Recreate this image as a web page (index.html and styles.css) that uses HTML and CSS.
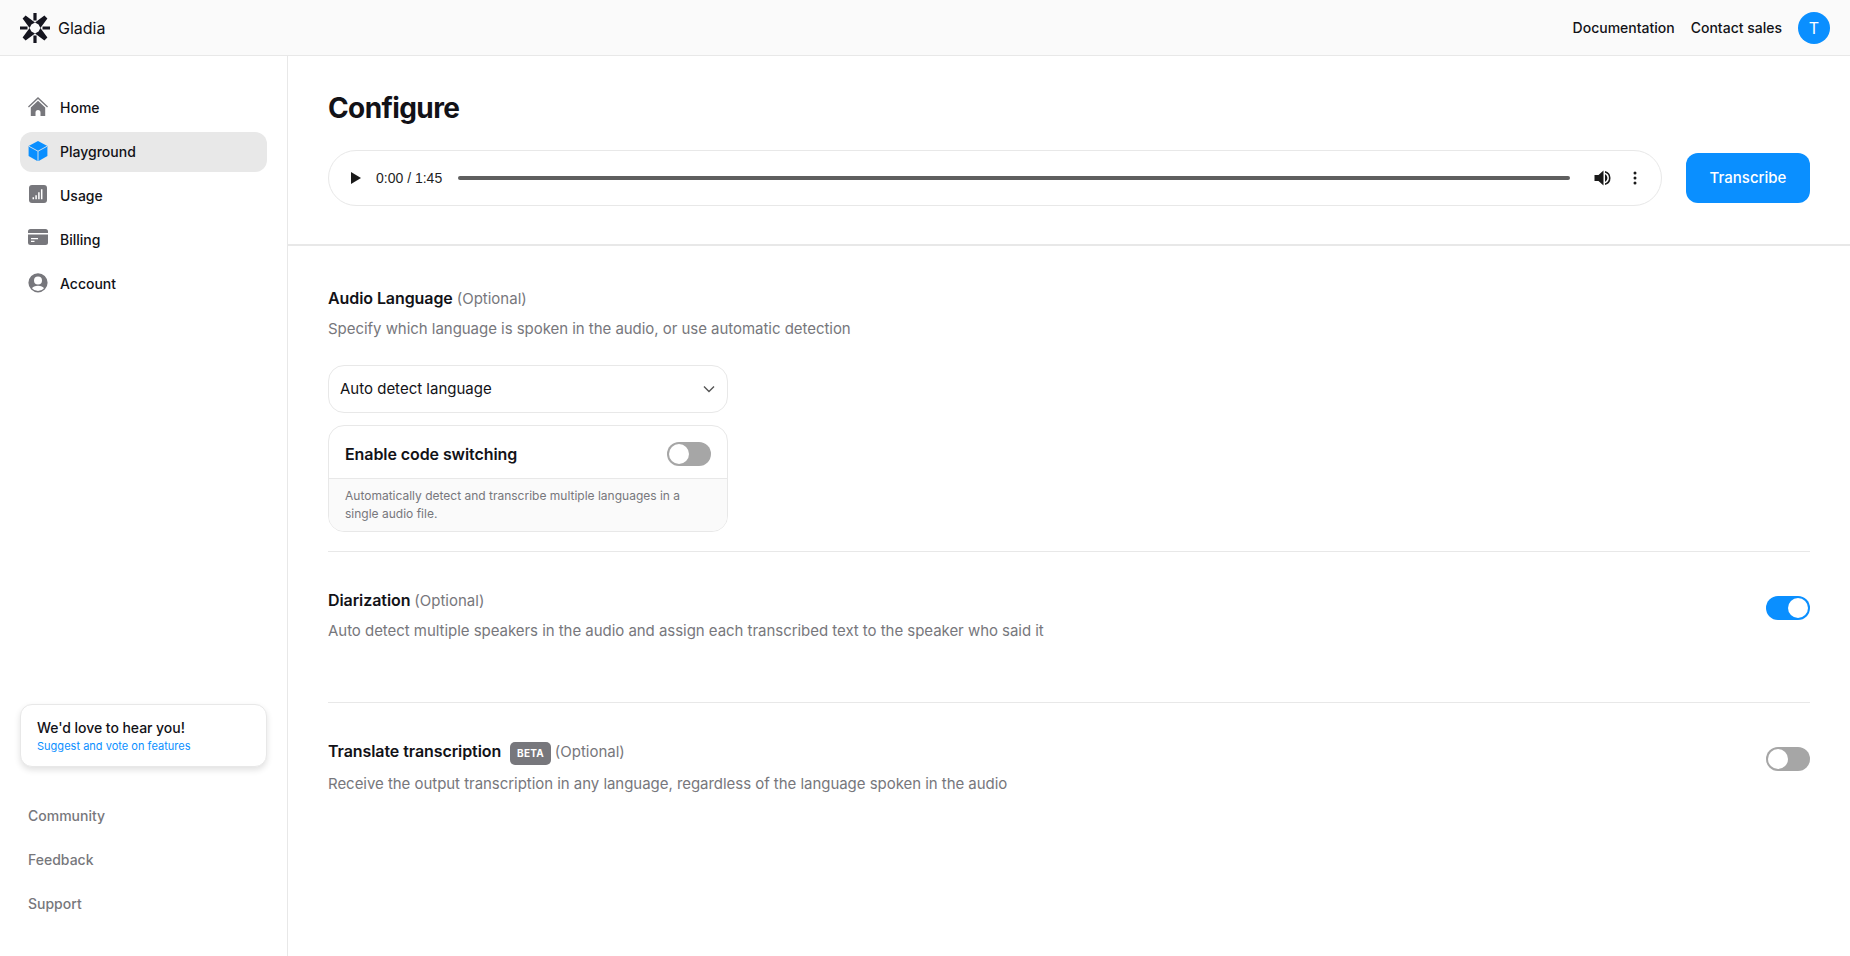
FILE: index.html
```html
<!DOCTYPE html>
<html lang="en">
<head>
<meta charset="utf-8">
<title>Gladia</title>
<link rel="stylesheet" href="styles.css">
</head>
<body>
<header class="topbar">
  <div class="brand">
    <svg class="logo" viewBox="0 0 30 30" fill="#15151f">
      <path d="M15 0V7.500M15 30V22.500M0 15H7.500M30 15H22.500" fill="none" stroke="#15151f" stroke-width="3.200"/>
      <path d="M5.600 2.600L15 9.600L11.400 11.400L9.600 15L2.600 5.600z"/>
      <path d="M24.400 2.600L15 9.600L18.600 11.400L20.400 15L27.400 5.600z"/>
      <path d="M5.600 27.400L15 20.400L11.400 18.600L9.600 15L2.600 24.400z"/>
      <path d="M24.400 27.400L15 20.400L18.600 18.600L20.400 15L27.400 24.400z"/>
    </svg>
    <span class="brand-name">Gladia</span>
  </div>
  <nav class="top-links">
    <a>Documentation</a>
    <a>Contact sales</a>
    <span class="avatar">T</span>
  </nav>
</header>
<div class="shell">
  <aside class="sidebar">
    <ul class="nav">
      <li class="nav-item">
        <svg class="nav-icon" viewBox="0 0 20 20" fill="#77777c"><path d="M10 0L0 9.400l.9 1L10 2l9.100 8.400.9-1z"/><path d="M10 3.800L2.800 10.500V19h4.700v-3.500a2.500 2.500 0 0 1 5 0V19h4.700v-8.500z"/></svg>
        <span>Home</span>
      </li>
      <li class="nav-item active">
        <svg class="nav-icon" viewBox="0 0 20 20"><path d="M10 0L19.400 5V15L10 20.400L.6 15V5z" fill="#0a8fff"/><path d="M.8 5.200L10 10.200L19.200 5.200M10 10.200V20.400" fill="none" stroke="#e8e8e8" stroke-width=".9"/></svg>
        <span>Playground</span>
      </li>
      <li class="nav-item">
        <svg class="nav-icon icon-usage" viewBox="0 0 20 20"><rect x="1" y="1" width="18" height="18" rx="3" fill="#77777c"/><path d="M5.300 15.300v-2M8.100 15.300v-4M10.900 15.300V8.300M13.700 15.300V5.300" stroke="#fff" stroke-width="1.500" fill="none"/></svg>
        <span>Usage</span>
      </li>
      <li class="nav-item">
        <svg class="nav-icon" viewBox="0 1 20 20" fill="#77777c"><path d="M2.500 1h15A2.500 2.500 0 0 1 20 3.500V5H0V3.500A2.500 2.500 0 0 1 2.500 1z"/><path d="M0 6.500h20v8A2.500 2.500 0 0 1 17.500 17h-15A2.500 2.500 0 0 1 0 14.500z"/><path d="M3 10h7v1.200H3zM3 12.800h3.500V14H3z" fill="#fff"/></svg>
        <span>Billing</span>
      </li>
      <li class="nav-item">
        <svg class="nav-icon" viewBox="0 0 20 20" fill="#77777c"><path fill-rule="evenodd" d="M10 .2a9.600 9.600 0 1 1 0 19.200a9.600 9.600 0 0 1 0-19.200zM10 3.600a4 4 0 1 0 0 8a4 4 0 0 0 0-8zM10 12.800c-2.900 0-5.200 1-6 2.400a7.700 7.700 0 0 0 12 0c-.8-1.400-3.100-2.400-6-2.400z"/></svg>
        <span>Account</span>
      </li>
    </ul>
    <div class="feedback-card">
      <div class="feedback-title">We'd love to hear you!</div>
      <div class="feedback-sub">Suggest and vote on features</div>
    </div>
    <ul class="sub-nav">
      <li>Community</li>
      <li>Feedback</li>
      <li>Support</li>
    </ul>
  </aside>
  <main class="main">
    <section class="config-head">
      <h1>Configure</h1>
      <div class="player-row">
        <div class="player">
          <svg class="play" viewBox="0 0 10 12" fill="#1a1a1a"><path d="M0 0L10 6L0 12z"/></svg>
          <span class="time">0:00 / 1:45</span>
          <span class="track"></span>
          <svg class="volume" viewBox="0 0 18 18" fill="#1a1a1a"><path d="M1.500 6v6H5.500L10.500 16.500V1.500L5.500 6z"/><path d="M12 5a4.500 4.500 0 0 1 0 8z"/><path d="M12 2v1.800a5.400 5.400 0 0 1 0 10.400V16a7.200 7.200 0 0 0 0-14z"/></svg>
          <svg class="more" viewBox="0 0 4 14" fill="#1a1a1a"><circle cx="2" cy="2" r="1.500"/><circle cx="2" cy="7" r="1.500"/><circle cx="2" cy="12" r="1.500"/></svg>
        </div>
        <button class="transcribe">Transcribe</button>
      </div>
    </section>
    <div class="options">
      <section class="option option-lang">
        <h2 class="option-title">Audio Language <span class="optional">(Optional)</span></h2>
        <p class="option-desc">Specify which language is spoken in the audio, or use automatic detection</p>
        <div class="lang-col">
          <div class="select">
            <span class="select-label">Auto detect language</span>
            <svg class="chevron" viewBox="0 0 12 8" fill="none" stroke="#555" stroke-width="1.400"><path d="M1 1.500L6 6.500L11 1.500"/></svg>
          </div>
          <div class="switch-card">
            <div class="switch-head">
              <span>Enable code switching</span>
              <span class="toggle"></span>
            </div>
            <div class="switch-foot">Automatically detect and transcribe multiple languages in a single audio file.</div>
          </div>
        </div>
      </section>
      <section class="option option-row">
        <div>
          <h2 class="option-title">Diarization <span class="optional">(Optional)</span></h2>
          <p class="option-desc">Auto detect multiple speakers in the audio and assign each transcribed text to the speaker who said it</p>
        </div>
        <span class="toggle on"></span>
      </section>
      <section class="option option-row">
        <div>
          <h2 class="option-title title-beta">Translate transcription <span class="beta">BETA</span> <span class="optional">(Optional)</span></h2>
          <p class="option-desc">Receive the output transcription in any language, regardless of the language spoken in the audio</p>
        </div>
        <span class="toggle"></span>
      </section>
    </div>
  </main>
</div>
</body>
</html>
```
FILE: styles.css
```css
* { box-sizing: border-box; }
html, body { height: 100%; }
body {
  margin: 0;
  font-family: Inter, "Liberation Sans", sans-serif;
  color: #121217;
  background: #fff;
  overflow: hidden;
}
ul { list-style: none; margin: 0; padding: 0; }
h1, h2, p { margin: 0; }

.topbar {
  height: 56px;
  background: #fafafa;
  border-bottom: 1px solid #e8e8e8;
  display: flex;
  align-items: center;
  justify-content: space-between;
  padding: 0 20px;
}
.brand { display: flex; align-items: center; gap: 8px; }
.logo { width: 30px; height: 30px; display: block; }
.brand-name { font-size: 16px; font-weight: 400; }
.top-links { display: flex; align-items: center; gap: 16px; font-size: 14px; font-weight: 500; }
.avatar {
  width: 32px; height: 32px; border-radius: 50%;
  background: #0a8fff; color: #fff;
  display: flex; align-items: center; justify-content: center;
  font-size: 16px; font-weight: 400;
}

.shell { display: flex; height: 900px; }
.sidebar {
  width: 288px;
  flex: none;
  border-right: 1px solid #e8e8e8;
  display: flex;
  flex-direction: column;
  padding: 32px 20px 0;
}
.nav { display: flex; flex-direction: column; gap: 4px; flex: none; height: 616px; }
.nav-item {
  height: 40px;
  width: 247px;
  display: flex;
  align-items: center;
  gap: 12px;
  padding: 0 8px;
  border-radius: 12px;
  font-size: 14px;
  font-weight: 500;
}
.nav-item span { padding-bottom: 2px; }
.nav-item.active { background: #e8e8e8; }
.nav-icon { width: 20px; height: 20px; flex: none; margin-bottom: 2px; }
.icon-usage { margin-bottom: 4px; }

.feedback-card {
  width: 247px;
  height: 63px;
  background: #fff;
  border: 1px solid #e8e8e8;
  border-radius: 12px;
  box-shadow: 0 3px 6px rgba(0, 0, 0, .12);
  padding: 14px 16px;
  flex: none;
}
.feedback-title { font-size: 14px; font-weight: 500; line-height: 17px; letter-spacing: -.05px; }
.feedback-sub { font-size: 11px; color: #0a8fff; line-height: 14px; margin-top: 3px; letter-spacing: .02px; }

.sub-nav { margin-top: 28px; display: flex; flex-direction: column; gap: 4px; }
.sub-nav li {
  height: 40px;
  display: flex;
  align-items: center;
  padding: 0 8px;
  font-size: 14px;
  font-weight: 500;
  color: #77777c;
}

.main { flex: 1; min-width: 0; }
.config-head {
  height: 190px;
  border-bottom: 2px solid #e8e8e8;
  padding: 35px 40px 0;
}
h1 { font-size: 28px; font-weight: 700; line-height: 34px; letter-spacing: -.6px; }
.player-row { display: flex; align-items: center; gap: 24px; margin-top: 25px; }
.player {
  flex: 1;
  height: 56px;
  border: 1px solid #e8e8e8;
  border-radius: 28px;
  display: flex;
  align-items: center;
  padding: 0 24px 0 22px;
}
.play { width: 10px; height: 12px; flex: none; }
.time { font-family: "Liberation Sans", Arial, sans-serif; font-size: 14px; color: #1f1f1f; margin-left: 15px; white-space: nowrap; }
.track { flex: 1; height: 4px; border-radius: 2px; background: #5f5f5f; margin: 0 23px 0 16px; }
.volume { width: 18px; height: 18px; flex: none; }
.more { width: 4px; height: 14px; flex: none; margin-left: 22px; }
.transcribe {
  width: 124px;
  height: 50px;
  flex: none;
  background: #0a8fff;
  color: #fff;
  border: 0;
  border-radius: 12px;
  padding-bottom: 2px;
  font: 500 15px Inter, sans-serif;
}

.options { padding: 0 40px; }
.option { border-bottom: 1px solid #e8e8e8; }
.option:last-child { border-bottom: 0; }
.option-lang { height: 306px; padding-top: 42px; }
.option-row {
  height: 151px;
  padding-top: 38px;
  display: flex;
  justify-content: space-between;
  align-items: flex-start;
}
.option-row .toggle { margin-top: 6px; }
.option-title { font-size: 16px; font-weight: 600; line-height: 20px; height: 22px; letter-spacing: -.08px; }
.title-beta { height: 24px; }
.optional { font-size: 15px; font-weight: 400; color: #77777c; letter-spacing: 0; }
.option-desc { font-size: 15px; line-height: 20px; color: #77777c; margin-top: 9px; letter-spacing: -.04px; }
.beta {
  display: inline-block;
  vertical-align: 0;
  background: #77777c;
  color: #fff;
  font-size: 10px;
  font-weight: 700;
  line-height: 23px;
  height: 23px;
  padding: 0 7px;
  border-radius: 5px;
  margin: 0 0 0 5px;
  letter-spacing: .2px;
}
.lang-col { width: 400px; margin-top: 26px; }
.select {
  height: 48px;
  border: 1px solid #e8e8e8;
  border-radius: 16px;
  display: flex;
  align-items: center;
  justify-content: space-between;
  padding: 0 12px 0 11px;
  font-size: 15px;
}
.select-label { padding-bottom: 2px; }
.chevron { width: 12px; height: 8px; }
.switch-card {
  margin-top: 12px;
  height: 107px;
  border: 1px solid #e8e8e8;
  border-radius: 16px;
  overflow: hidden;
  display: flex;
  flex-direction: column;
}
.switch-head {
  height: 53px;
  flex: none;
  display: flex;
  align-items: center;
  justify-content: space-between;
  padding: 4px 16px 0;
  font-size: 16px;
  font-weight: 600;
  letter-spacing: -.08px;
  border-bottom: 1px solid #e8e8e8;
}
.switch-foot {
  flex: 1;
  background: #fafafa;
  padding: 8px 16px 0;
  font-size: 12px;
  line-height: 18px;
  color: #77777c;
}
.toggle {
  width: 44px;
  height: 24px;
  flex: none;
  border-radius: 12px;
  background: #a6a6a6;
  padding: 2px;
  display: block;
}
.toggle::before {
  content: "";
  display: block;
  width: 20px;
  height: 20px;
  border-radius: 50%;
  background: #fff;
}
.toggle.on { background: #0a8fff; }
.toggle.on::before { margin-left: 20px; }
```
